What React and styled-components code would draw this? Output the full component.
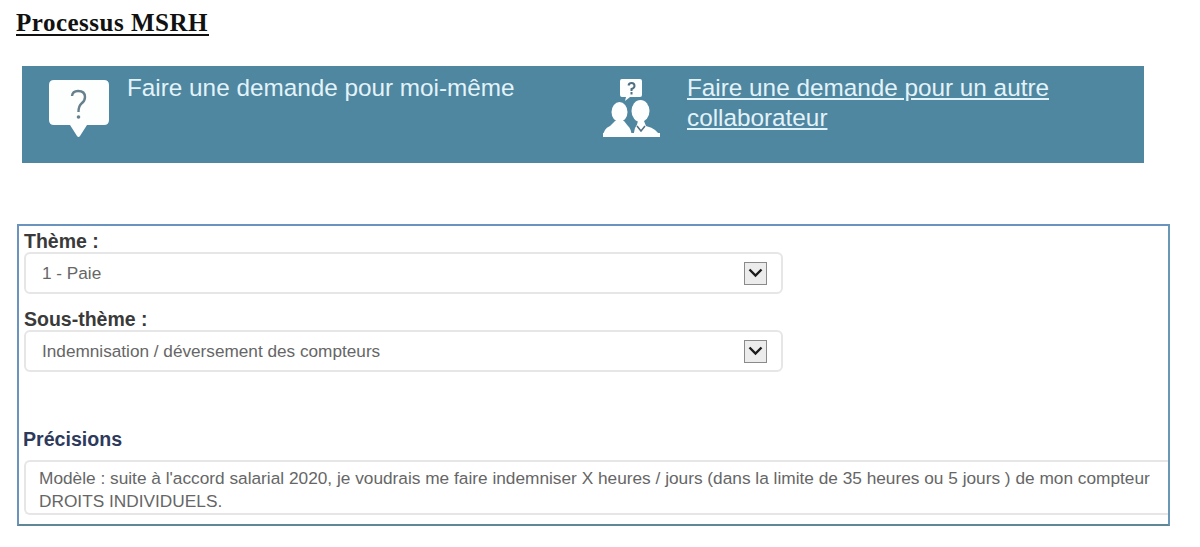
import React from 'react'
import styled, { createGlobalStyle } from 'styled-components'

const GlobalStyle = createGlobalStyle`
  html, body {
    margin: 0;
    background: #fff;
  }
  body {
    font-family: "Liberation Sans", Arial, sans-serif;
  }
`

const Page = styled.div`
  width: 1200px;
  height: 547px;
  overflow: hidden;
  padding: 9px 0 0 16px;
  box-sizing: border-box;
`

const Title = styled.h1`
  display: block;
  width: 193px;
  height: 25px;
  margin: 0;
  font-family: "Liberation Serif", serif;
  font-size: 25px;
  line-height: 27px;
  letter-spacing: 0.5px;
  white-space: nowrap;
  font-weight: 700;
  color: #111;
  border-bottom: 2px solid #111;
`

const Banner = styled.div`
  display: flex;
  width: 1122px;
  height: 97px;
  margin: 30px 0 0 6px;
  background: #4f86a0;
  color: #e2f3f9;
`

const BannerItem = styled.div`
  display: flex;
  width: ${props => props.$width}px;
  padding-top: ${props => props.$top}px;
  padding-left: ${props => props.$left}px;
  box-sizing: border-box;
`

const BannerText = styled.div`
  margin-left: ${props => props.$gap}px;
  margin-top: ${props => props.$offset}px;
  width: 400px;
  font-size: 24.3px;
  line-height: 30px;
`

const BannerLink = styled.a`
  color: inherit;
  text-decoration: underline;
`

const Panel = styled.div`
  width: 1153px;
  height: 302px;
  margin: 61px 0 0 1px;
  padding: 5px 0 0 5px;
  box-sizing: border-box;
  border: 2px solid #6a93bd;
  border-bottom-color: #5f8795;
  border-right-color: #6a97b5;
`

const Label = styled.div`
  font-size: 19.5px;
  line-height: 20px;
  font-weight: 700;
  color: #3a3a3a;
`

const Select = styled.div`
  display: flex;
  align-items: center;
  justify-content: space-between;
  width: 759px;
  height: 42px;
  margin: 1px 0 15px;
  padding: 0 14px 0 16px;
  box-sizing: border-box;
  border: 2px solid #e6e6e6;
  border-radius: 6px;
  font-size: 17.2px;
  color: #666;
`

const Arrow = styled.span`
  display: flex;
  align-items: center;
  justify-content: center;
  width: 23px;
  height: 23px;
  box-sizing: border-box;
  border: 1px solid #8a8a8a;
  background: #ececec;
`

const Heading = styled.div`
  margin: 56px 0 0 -1px;
  font-size: 19.6px;
  line-height: 22px;
  font-weight: 700;
  color: #2e3a5c;
`

const TextBox = styled.div`
  height: 55px;
  margin-top: 10px;
  padding: 5px 15px 0 13px;
  box-sizing: border-box;
  border: 2px solid #e6e6e6;
  border-right: 0;
  border-radius: 6px 0 0 6px;
  font-size: 17.27px;
  line-height: 23px;
  color: #666;
`

function BubbleIcon() {
  return (
    <svg width="60" height="60" viewBox="0 0 60 60">
      <path
        d="M5 0H55Q60 0 60 5V40Q60 45 55 45H38L31 56Q29.500 58 28 56L21 45H5Q0 45 0 40V5Q0 0 5 0Z"
        fill="#fdfefe"
      />
      <path
        d="M23 16Q23.500 11 29 11Q36 11 36 17Q36 21 32.500 23.500Q29.500 26 29.500 32"
        fill="none"
        stroke="#66808c"
        strokeWidth="2.400"
      />
      <circle cx="29.500" cy="37" r="1.800" fill="#66808c" />
    </svg>
  )
}

function PeopleIcon() {
  return (
    <svg width="58" height="60" viewBox="0 0 58 60">
      <path d="M20 0H38Q40 0 40 2V16Q40 18 38 18H28L23 22L24 18H20Q18 18 18 16V2Q18 0 20 0Z" fill="#fdfefe" />
      <path d="M26.500 6.500Q27 4 29.500 4Q32.500 4 32.500 7Q32.500 9 29.500 10V12M29.500 13V15.500" fill="none" stroke="#4f6f80" strokeWidth="2" />
      <ellipse cx="17.500" cy="33" rx="8" ry="10" fill="#fdfefe" />
      <path d="M1 58Q1 50 8 47L13 42H22L26 47Q29 49 30 58Z" fill="#fdfefe" />
      <ellipse cx="38.500" cy="32" rx="9" ry="11" fill="#fdfefe" />
      <path d="M31 58L33 49Q35 47 36 42H42L44 47Q56 50 58 58Z" fill="#fdfefe" />
      <rect x="1" y="54" width="57" height="4" fill="#fdfefe" />
      <path d="M35 47L39 52L43 47" fill="none" stroke="#4f6f80" strokeWidth="1.500" />
    </svg>
  )
}

function Chevron() {
  return (
    <svg width="15" height="10" viewBox="0 0 15 10">
      <path d="M1.500 1.500L7.500 7.500L13.500 1.500" fill="none" stroke="#1c1c1c" strokeWidth="2.400" />
    </svg>
  )
}

export default function App() {
  return (
    <Page>
      <GlobalStyle />
      <Title>Processus MSRH</Title>
      <Banner>
        <BannerItem $width={560} $top={14} $left={27}>
          <BubbleIcon />
          <BannerText $gap={18} $offset={-7}>Faire une demande pour moi-même</BannerText>
        </BannerItem>
        <BannerItem $width={562} $top={13} $left={20}>
          <PeopleIcon />
          <BannerText $gap={27} $offset={-6}>
            <BannerLink href="#">Faire une demande pour un autre collaborateur</BannerLink>
          </BannerText>
        </BannerItem>
      </Banner>
      <Panel>
        <Label>Thème :</Label>
        <Select>
          1 - Paie
          <Arrow><Chevron /></Arrow>
        </Select>
        <Label>Sous-thème :</Label>
        <Select>
          Indemnisation / déversement des compteurs
          <Arrow><Chevron /></Arrow>
        </Select>
        <Heading>Précisions</Heading>
        <TextBox>
          Modèle : suite à l'accord salarial 2020, je voudrais me faire indemniser X heures / jours (dans la limite de 35 heures ou 5 jours ) de mon compteur DROITS INDIVIDUELS.
        </TextBox>
      </Panel>
    </Page>
  )
}
